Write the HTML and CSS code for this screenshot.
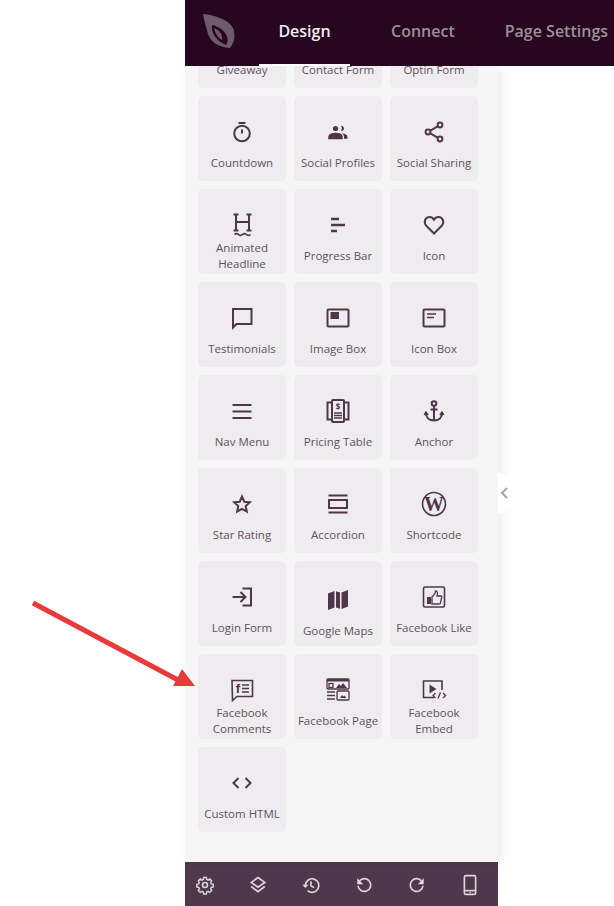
FILE: index.html
```html
<!DOCTYPE html>
<html lang="en">
<head>
  <meta charset="UTF-8" />
  <meta name="viewport" content="width=device-width, initial-scale=1" />
  <title>Design</title>
  <link rel="stylesheet" href="styles.css">
</head>
<body>
  <div class="app">
    <header class="topbar">
      <div class="logo">
        <svg width="36" height="36" viewBox="0 0 36 36"><path class="leaf" fill-rule="evenodd" d="M2 0C14 1 28 6 32 14 35 22 33 29 29 34 17 33 10 28 7 20 5 13 3 6 2 0ZM11 11C10 20 16 27 25 31 27 28 27 26 26 23 24 17 19 13 11 11Z"/><path class="leaf" d="M13 14C19 16 22 22 21 26 17 24 14 19 13 14Z"/></svg>
      </div>
      <nav class="tabs">
        <a class="tab active">Design</a>
        <a class="tab tab-connect">Connect</a>
        <a class="tab tab-settings">Page Settings</a>
      </nav>
    </header>

    <section class="panel">
      <div class="scroller">
        <div class="blocks">
          <div class="block"><div class="block-icon"></div><div class="block-label">Giveaway</div></div>
          <div class="block"><div class="block-icon"></div><div class="block-label">Contact Form</div></div>
          <div class="block"><div class="block-icon"></div><div class="block-label">Optin Form</div></div>

          <div class="block">
            <div class="block-icon"><svg viewBox="0 0 24 24"><circle cx="12" cy="13.5" r="7.8"/><path d="M8.5 3h7M12 9.5v4"/></svg></div>
            <div class="block-label">Countdown</div>
          </div>
          <div class="block">
            <div class="block-icon"><svg viewBox="0 0 24 24"><circle class="solid" cx="9.5" cy="8.5" r="2.6"/><path class="solid" d="M15 5.800c2 .2 3 1.300 3 2.700s-1 2.500-3 2.700c1-1.600 1-3.800 0-5.400Z"/><path class="thick" d="M3.500 18v-1c0-2 3-3 6-3s6 1 6 3v1Z"/><path class="solid" d="M16 13.500c3 .2 5.500 1.300 5.500 3.500v1.700H18v-2c0-1.300-.8-2.300-2-3.200Z"/></svg></div>
            <div class="block-label">Social Profiles</div>
          </div>
          <div class="block">
            <div class="block-icon"><svg viewBox="0 0 24 24"><circle cx="18" cy="5" r="2.400"/><circle cx="6" cy="12" r="2.400"/><circle cx="18" cy="19" r="2.400"/><path d="M8 10.800 16 6.200M8 13.200l8 4.600"/></svg></div>
            <div class="block-label">Social Sharing</div>
          </div>

          <div class="block">
            <div class="block-icon"><svg viewBox="0 0 24 24"><path d="M6 1v17M19 1v17M6 9h13M3.500 1.500h5M16.500 1.500h5M3.500 17.500h5M16.500 17.500h5"/><path class="wave" d="M4.500 21.500c1.300-1.200 2.700-1.200 4 0s2.700 1.200 4 0 2.700-1.200 4 0 2.700 1.200 4 0"/></svg></div>
            <div class="block-label">Animated<br>Headline</div>
          </div>
          <div class="block">
            <div class="block-icon"><svg viewBox="0 0 24 24"><path class="thick" d="M5 6h8M5 12h14M5 18h6"/></svg></div>
            <div class="block-label">Progress Bar</div>
          </div>
          <div class="block">
            <div class="block-icon"><svg viewBox="0 0 24 24"><path d="M12 20.500 4.300 12.800C1 9 3.500 4 7.500 4c2 0 3.500 1 4.500 2.700C13 5 14.500 4 16.500 4c4 0 6.500 5 3.200 8.800Z"/></svg></div>
            <div class="block-label">Icon</div>
          </div>

          <div class="block">
            <div class="block-icon"><svg viewBox="0 0 24 24"><path d="M3 3h18.500v15H6.500L3 21.500Z"/></svg></div>
            <div class="block-label">Testimonials</div>
          </div>
          <div class="block">
            <div class="block-icon"><svg viewBox="0 0 24 24"><rect x="1.500" y="3.500" width="21" height="17" rx="1"/><rect class="solid" x="4.500" y="6" width="8.500" height="7"/></svg></div>
            <div class="block-label">Image Box</div>
          </div>
          <div class="block">
            <div class="block-icon"><svg viewBox="0 0 24 24"><rect x="1.500" y="3.500" width="21" height="17" rx="1"/><path class="thin" d="M5 8h9M5 11.500h7"/></svg></div>
            <div class="block-label">Icon Box</div>
          </div>

          <div class="block">
            <div class="block-icon"><svg viewBox="0 0 24 24"><path d="M2.500 6h19M2.500 12.500h19M2.500 19h19"/></svg></div>
            <div class="block-label">Nav Menu</div>
          </div>
          <div class="block">
            <div class="block-icon"><svg viewBox="0 0 24 24"><path d="M6 3.500H1.500v17H6M18 3.500h4.500v17H18"/><rect x="6" y="1" width="12" height="22" rx="1"/><text class="dollar" x="12" y="10.500">$</text><path class="thin" d="M8 14h8M8 16.500h8M8 19h8"/></svg></div>
            <div class="block-label">Pricing Table</div>
          </div>
          <div class="block">
            <div class="block-icon"><svg viewBox="0 0 24 24"><circle cx="12" cy="4.500" r="2.300"/><path d="M12 7v14.500M8.500 10.500h7M4 14c0 4.500 3.300 7.500 8 7.500s8-3 8-7.500M2.500 16 4 13.500 6 16M21.500 16 20 13.500 18 16"/></svg></div>
            <div class="block-label">Anchor</div>
          </div>

          <div class="block">
            <div class="block-icon"><svg viewBox="0 0 24 24"><path d="m12 4.500 2.300 5.200 5.500.6-4.100 3.700 1.100 5.600-4.800-2.800-4.800 2.800 1.100-5.600-4.100-3.700 5.500-.6Z"/></svg></div>
            <div class="block-label">Star Rating</div>
          </div>
          <div class="block">
            <div class="block-icon"><svg viewBox="0 0 24 24"><path d="M2.500 3.500h19M2.500 20.500h19"/><rect x="3" y="8" width="18" height="8"/></svg></div>
            <div class="block-label">Accordion</div>
          </div>
          <div class="block">
            <div class="block-icon"><svg viewBox="0 0 24 24"><circle class="ring" cx="12" cy="12" r="11.500"/><text class="wp" x="12" y="18.500">W</text></svg></div>
            <div class="block-label">Shortcode</div>
          </div>

          <div class="block">
            <div class="block-icon"><svg viewBox="0 0 24 24"><path d="M12.500 3.500H21v17h-8.500M2.500 12H15M10.500 7l5 5-5 5"/></svg></div>
            <div class="block-label">Login Form</div>
          </div>
          <div class="block block-low">
            <div class="block-icon"><svg viewBox="0 0 24 24"><path class="solid" d="M2 5.500 8.500 3v16.500L2 22ZM15.500 4.500 22 2v16.500L15.500 21ZM10 3.200l4 1.400v16.200l-4-1.400Z"/></svg></div>
            <div class="block-label">Google Maps</div>
          </div>
          <div class="block">
            <div class="block-icon"><svg viewBox="0 0 24 24"><rect class="ring" x="1.500" y="2" width="21" height="20" rx="1.500"/><path class="solid" d="M5 12h4v7H5Z"/><path class="thin" d="M10 12c2-2 3.500-3.500 3.500-6 2 0 2.500 2 1.500 5h4c1 0 1 1 .5 2l-1 5c-.2.800-.7 1-1.500 1h-7Z"/></svg></div>
            <div class="block-label">Facebook Like</div>
          </div>

          <div class="block">
            <div class="block-icon"><svg viewBox="0 0 24 24"><path class="ring" d="M2 2.500h20.500v16H7L2.500 22.500Z"/><text class="fb" x="8" y="14.500">f</text><path class="thin" d="M12 7h7M12 10.500h7M12 14h7"/></svg></div>
            <div class="block-label">Facebook<br>Comments</div>
          </div>
          <div class="block">
            <div class="block-icon"><svg viewBox="0 0 24 24"><rect class="thin" x="1" y="1" width="22" height="10" rx="1"/><path class="solid" d="M1 1h22v2.500H1ZM10 10l3-4 2 2 2-3 4 5Z"/><rect class="thin" x="3" y="5.500" width="4" height="4"/><path class="thin" d="M1 14h8M1 17.500h8M1 21h8"/><rect class="thin" x="11" y="13" width="12" height="9" rx="1"/><path class="solid" d="M14 20l2-3 1.500 1.500 1-1 2 2.500Z"/></svg></div>
            <div class="block-label">Facebook Page</div>
          </div>
          <div class="block">
            <div class="block-icon"><svg viewBox="0 0 24 24"><path class="ring" d="M12 19.500H1.500V3H20v9"/><path class="solid" d="M7.500 6.500v9l7-4.500Z"/><path class="thin" d="m13.500 15-2.500 2.500 2.500 2.500M21 15l2.500 2.500L21 20M18.500 14.500 16 20.500"/></svg></div>
            <div class="block-label">Facebook<br>Embed</div>
          </div>

          <div class="block">
            <div class="block-icon"><svg viewBox="0 0 24 24"><path d="M8.500 7 3.500 12l5 5M15.500 7l5 5-5 5"/></svg></div>
            <div class="block-label">Custom HTML</div>
          </div>
        </div>
      </div>
      <button class="collapse"><svg width="8" height="12" viewBox="0 0 8 12"><path d="M7 1 2 6l5 5"/></svg></button>
    </section>

    <footer class="toolbar">
      <svg viewBox="0 0 24 24"><circle cx="12" cy="12" r="3.300"/><path d="M10 1.500h4l.7 3 2 .9 2.600-1.600 2.900 2.900-1.600 2.600.9 2 3 .7v4l-3 .7-.9 2 1.600 2.600-2.900 2.900-2.600-1.600-2 .9-.7 3h-4l-.7-3-2-.9-2.600 1.600-2.900-2.900 1.600-2.600-.9-2-3-.7v-4l3-.7.9-2-1.600-2.600 2.900-2.900 2.600 1.600 2-.9Z" transform="translate(1.500 .7) scale(.875)"/></svg>
      <svg viewBox="0 0 24 24"><path d="m12 2 9 6.500-9 6.500-9-6.500Z"/><path d="m3 14 9 7 9-7"/></svg>
      <svg viewBox="0 0 24 24"><path d="M4.500 12A9 9 0 1 1 7.500 19.500M12 7v6l4 2.500"/><path class="solid" d="M.5 11.500h8l-4 4.500Z"/></svg>
      <svg viewBox="0 0 24 24"><path d="M6 6.500A8.500 8.500 0 1 1 4 13"/><path class="solid" d="M3 3v8h8Z"/></svg>
      <svg viewBox="0 0 24 24"><path d="M18 6.500A8.500 8.500 0 1 0 20 13"/><path class="solid" d="M21 3v8h-8Z"/></svg>
      <svg viewBox="0 0 24 24"><rect x="4.500" y="-.5" width="15" height="25" rx="2"/><path d="M4.500 19.500h15"/><circle class="solid" cx="12" cy="22" r="1"/></svg>
    </footer>
  </div>

  <svg class="arrow" width="200" height="100" viewBox="0 0 200 100"><path class="arrow-line" d="M33 13 178 90"/><path class="arrow-head" d="M195 96H173L182 79Z"/></svg>
</body>
</html>
```

FILE: styles.css
```css
* {
  box-sizing: border-box;
}
body {
  margin: 0;
  background: #fff;
  font-family: "Open Sans", Arial, sans-serif;
  overflow: hidden;
}
.app {
  margin-left: 185px;
  height: 906px;
  display: flex;
  flex-direction: column;
}
.topbar {
  height: 66px;
  flex: none;
  background: #26071f;
  display: flex;
  position: relative;
  z-index: 2;
}
.logo {
  width: 74px;
  padding: 14px 0 0 16px;
}
.leaf {
  fill: #6e5a6a;
}
.tabs {
  display: flex;
}
.tab {
  display: flex;
  align-items: center;
  height: 66px;
  padding-bottom: 2px;
  font-size: 16px;
  font-weight: 600;
  color: #9c8f99;
  white-space: nowrap;
  border-bottom: 2px solid transparent;
}
.tab.active {
  width: 91px;
  justify-content: center;
  color: #f1edf0;
  border-bottom-color: #fff;
}
.tab-connect {
  margin-left: 41px;
}
.tab-settings {
  margin-left: 50px;
}

.panel {
  width: 313px;
  flex: 1;
  min-height: 0;
  background: #f6f6f7;
  box-shadow: 4px 0 10px rgba(0, 0, 0, 0.07);
  position: relative;
}
.scroller {
  height: 100%;
  overflow: hidden;
}
.blocks {
  margin-top: -63px;
  display: grid;
  grid-template-columns: repeat(3, 88px);
  grid-auto-rows: 85px;
  gap: 8px;
  padding-left: 13px;
}
.block {
  background: #eeecef;
  border-radius: 5px;
  display: flex;
  flex-direction: column;
  align-items: center;
}
.block-icon {
  width: 24px;
  height: 24px;
  margin-top: 24px;
}
.block-low .block-icon {
  margin-top: 27px;
}
.block-label {
  height: 32px;
  margin-top: 3px;
  display: flex;
  align-items: center;
  text-align: center;
  font-size: 11.5px;
  line-height: 16px;
  white-space: nowrap;
  color: #63505f;
}
.block-icon svg {
  display: block;
  width: 24px;
  height: 24px;
  overflow: visible;
  fill: none;
  stroke: #4f364b;
  stroke-width: 2;
}
.block-icon .solid {
  fill: #4f364b;
  stroke: none;
}
.block-icon .thin {
  stroke-width: 1.3;
}
.block-icon .wave {
  stroke-width: 1.6;
}
.block-icon .ring {
  stroke-width: 1.6;
}
.block-icon .thick {
  fill: #4f364b;
  stroke-width: 2.6;
}
.block-icon text {
  fill: #4f364b;
  stroke: none;
  text-anchor: middle;
}
.dollar {
  font: bold 8px "Open Sans", sans-serif;
}
.wp {
  font: bold 20px "Liberation Serif", serif;
}
.fb {
  font: bold 13px "Liberation Sans", sans-serif;
}

.collapse {
  position: absolute;
  left: 313px;
  top: 407px;
  width: 12px;
  height: 40px;
  padding: 0 0 0 2px;
  border: none;
  background: #fff;
  border-radius: 0 12px 12px 0;
  display: flex;
  align-items: center;
}
.collapse path {
  fill: none;
  stroke: #a9a4a8;
  stroke-width: 2;
}

.toolbar {
  width: 313px;
  height: 44px;
  flex: none;
  background: #4f374c;
  display: flex;
  align-items: center;
  gap: 29px;
  padding: 2px 0 0 8px;
}
.toolbar svg {
  width: 24px;
  height: 24px;
  padding: 3px;
  overflow: visible;
  fill: none;
  stroke: #dcd6da;
  stroke-width: 2.2;
}
.toolbar .solid {
  fill: #dcd6da;
  stroke: none;
}

.arrow {
  position: absolute;
  left: 0;
  top: 590px;
  z-index: 3;
}
.arrow-line {
  stroke: #e83a3a;
  stroke-width: 5;
  fill: none;
}
.arrow-head {
  fill: #e83a3a;
}
```
